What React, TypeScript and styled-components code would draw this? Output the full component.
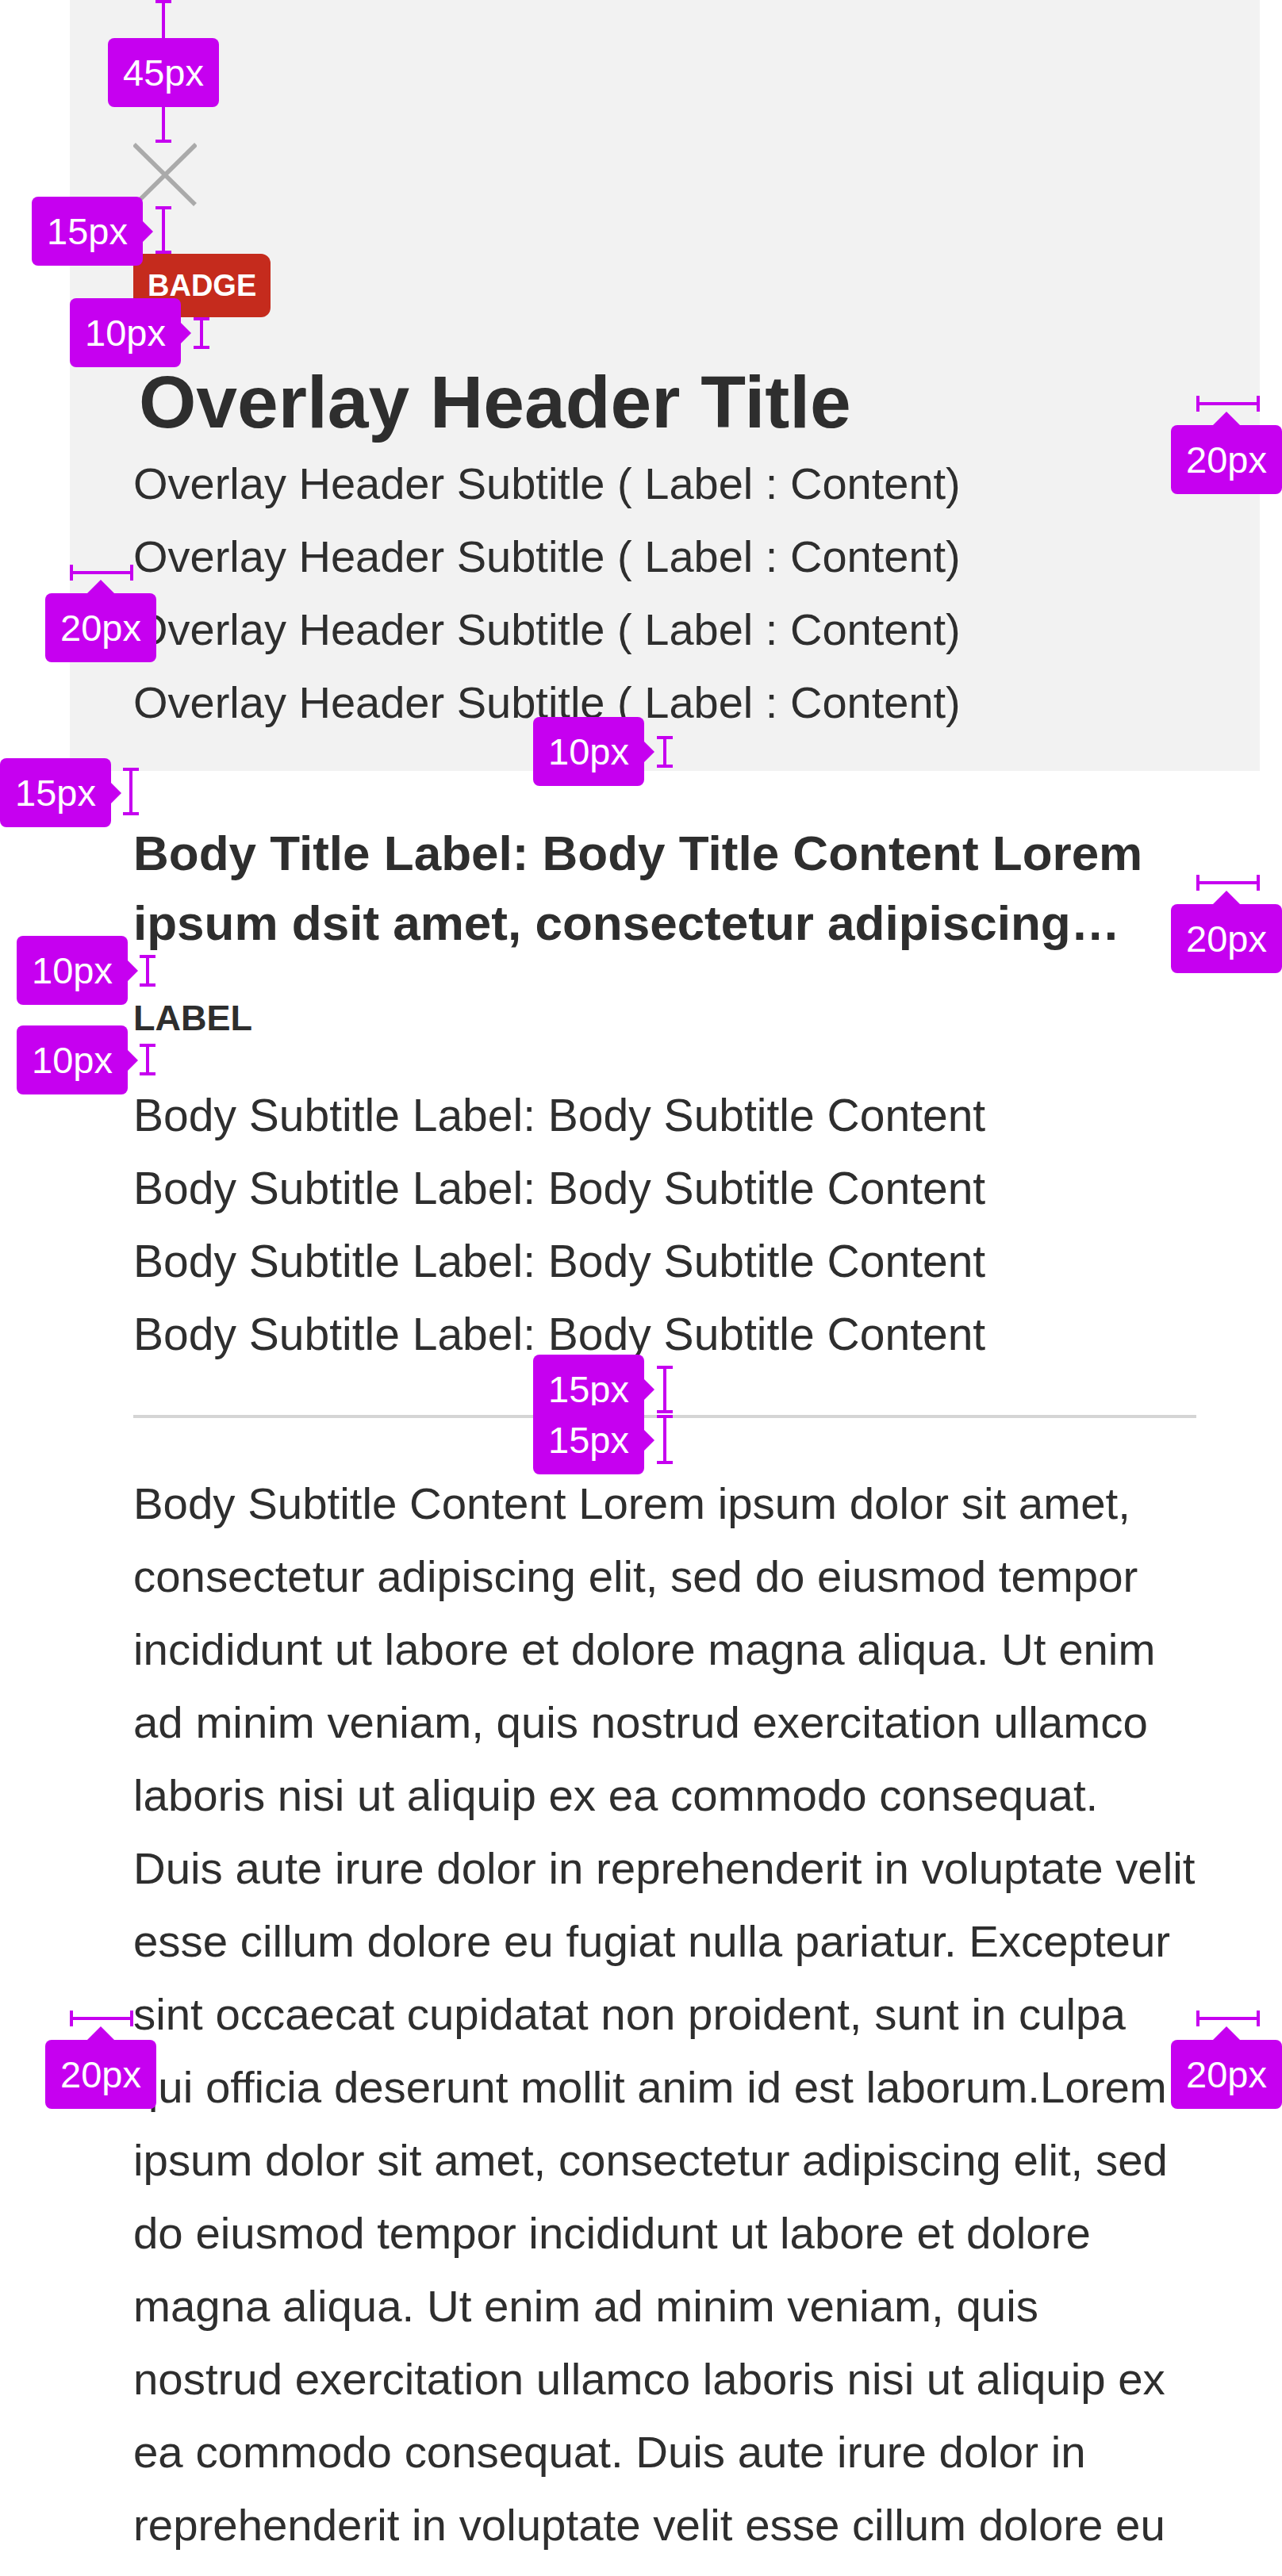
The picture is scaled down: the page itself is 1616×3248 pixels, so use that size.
import React from "react";
import styled, { createGlobalStyle, css } from "styled-components";

const INK = "#2e2e2e";
const MAGENTA = "#c600f0";
const FONT = `"Liberation Sans", Arial, Helvetica, sans-serif`;

const GlobalStyle = createGlobalStyle`
  html, body {
    margin: 0;
    padding: 0;
    background: #ffffff;
    overflow: hidden;
  }
  body {
    font-family: ${FONT};
    color: ${INK};
  }
  * { box-sizing: border-box; }
`;

const Canvas = styled.div`
  position: relative;
  width: 1616px;
  height: 3248px;
  overflow: hidden;
  background: #ffffff;
`;

const Screen = styled.main`
  margin-left: 88px;
  width: 1500px;
`;

/* ---------- overlay header ---------- */

const Header = styled.header`
  background: #f2f2f2;
  padding: 180px 80px 40px;
  display: flex;
  flex-direction: column;
  align-items: flex-start;
`;

const CloseButton = styled.button`
  display: block;
  width: 80px;
  height: 80px;
  padding: 0;
  border: 0;
  background: none;
  svg { display: block; }
`;

const Badge = styled.span`
  margin-top: 60px;
  height: 80px;
  padding: 0 18px;
  display: inline-flex;
  align-items: center;
  background: #c52b1d;
  color: #ffffff;
  border-radius: 12px;
  font-family: ${FONT};
  font-weight: 700;
  font-size: 38px;
  line-height: 1;
`;

const Title = styled.h1`
  margin: 40px 0 0;
  padding: 10px 0 0 7px;
  font-family: ${FONT};
  font-weight: 700;
  font-size: 93px;
  line-height: 114px;
  color: ${INK};
`;

const LineList = styled.div`
  display: flex;
  flex-direction: column;
  align-self: stretch;
`;

const Line = styled.p<{ $size?: number }>`
  margin: 0;
  font-family: ${FONT};
  font-size: ${(p) => p.$size ?? 56}px;
  line-height: 92px;
  color: ${INK};
  white-space: nowrap;
`;

/* ---------- body ---------- */

const Body = styled.section`
  padding: 60px 80px 0;
  display: flex;
  flex-direction: column;
`;

const BodyTitle = styled.h2`
  margin: 0;
  font-family: ${FONT};
  font-weight: 700;
  font-size: 62px;
  line-height: 88px;
  color: ${INK};
  display: -webkit-box;
  -webkit-line-clamp: 2;
  -webkit-box-orient: vertical;
  overflow: hidden;
`;

const Label = styled.div`
  margin-top: 40px;
  font-family: ${FONT};
  font-weight: 700;
  font-size: 45px;
  line-height: 72px;
  text-transform: uppercase;
  color: ${INK};
`;

const BodyLines = styled(LineList)`
  margin-top: 40px;
`;

const Divider = styled.hr`
  margin: 56px 0 0;
  height: 4px;
  border: 0;
  background: #d5d5d5;
`;

const Paragraph = styled.p`
  margin: 62px 0 0;
  font-family: ${FONT};
  font-size: 56.4px;
  line-height: 92px;
  color: ${INK};
`;

/* ---------- spec annotations (overlay) ---------- */

type Arrow = "right" | "up" | "none";

const Tag = styled.div<{ $x: number; $y: number; $arrow: Arrow }>`
  position: absolute;
  left: ${(p) => p.$x}px;
  top: ${(p) => p.$y}px;
  width: 140px;
  height: 87px;
  border-radius: 8px;
  background: ${MAGENTA};
  color: #ffffff;
  font-family: ${FONT};
  font-size: 47px;
  line-height: 1;
  display: flex;
  align-items: center;
  justify-content: center;
  &::after {
    content: "";
    position: absolute;
    width: 0;
    height: 0;
    ${(p) =>
      p.$arrow === "right" &&
      css`
        left: 100%;
        top: 50%;
        margin-top: -13px;
        border-left: 13px solid ${MAGENTA};
        border-top: 13px solid transparent;
        border-bottom: 13px solid transparent;
      `}
    ${(p) =>
      p.$arrow === "up" &&
      css`
        bottom: 100%;
        left: 50%;
        margin-left: -17px;
        border-bottom: 17px solid ${MAGENTA};
        border-left: 17px solid transparent;
        border-right: 17px solid transparent;
      `}
  }
`;

const VMeasure = styled.div<{ $x: number; $y1: number; $y2: number }>`
  position: absolute;
  left: ${(p) => p.$x - 10}px;
  top: ${(p) => p.$y1}px;
  width: 20px;
  height: ${(p) => p.$y2 - p.$y1}px;
  border-top: 4px solid ${MAGENTA};
  border-bottom: 4px solid ${MAGENTA};
  &::before {
    content: "";
    position: absolute;
    left: 8px;
    top: 0;
    bottom: 0;
    width: 4px;
    background: ${MAGENTA};
  }
`;

const HMeasure = styled.div<{ $x1: number; $x2: number; $y: number }>`
  position: absolute;
  left: ${(p) => p.$x1}px;
  top: ${(p) => p.$y - 10}px;
  width: ${(p) => p.$x2 - p.$x1}px;
  height: 20px;
  border-left: 4px solid ${MAGENTA};
  border-right: 4px solid ${MAGENTA};
  &::before {
    content: "";
    position: absolute;
    top: 8px;
    left: 0;
    right: 0;
    height: 4px;
    background: ${MAGENTA};
  }
`;

const vLines: Array<[number, number, number]> = [
  [206, 0, 180],
  [206, 260, 320],
  [254, 400, 440],
  [838, 928, 968],
  [165, 968, 1028],
  [186, 1204, 1244],
  [186, 1316, 1356],
  [838, 1722, 1782],
  [838, 1784, 1846],
];

const hLines: Array<[number, number, number]> = [
  [1508, 1588, 509],
  [88, 168, 722],
  [1508, 1588, 1113],
  [88, 168, 2545],
  [1508, 1588, 2545],
];

const tags: Array<{ x: number; y: number; text: string; arrow: Arrow }> = [
  { x: 136, y: 48, text: "45px", arrow: "none" },
  { x: 40, y: 248, text: "15px", arrow: "right" },
  { x: 88, y: 376, text: "10px", arrow: "right" },
  { x: 1476, y: 536, text: "20px", arrow: "up" },
  { x: 57, y: 748, text: "20px", arrow: "up" },
  { x: 672, y: 904, text: "10px", arrow: "right" },
  { x: 0, y: 956, text: "15px", arrow: "right" },
  { x: 1476, y: 1140, text: "20px", arrow: "up" },
  { x: 21, y: 1180, text: "10px", arrow: "right" },
  { x: 21, y: 1293, text: "10px", arrow: "right" },
  { x: 672, y: 1708, text: "15px", arrow: "right" },
  { x: 672, y: 1772, text: "15px", arrow: "right" },
  { x: 57, y: 2572, text: "20px", arrow: "up" },
  { x: 1476, y: 2572, text: "20px", arrow: "up" },
];

/* ---------- content ---------- */

const headerLines = Array.from({ length: 4 }, () => "Overlay Header Subtitle ( Label : Content)");
const bodyLines = Array.from({ length: 4 }, () => "Body Subtitle Label: Body Subtitle Content");

const LOREM =
  "Body Subtitle Content Lorem ipsum dolor sit amet, consectetur adipiscing elit, sed do eiusmod tempor incididunt ut labore et dolore magna aliqua. Ut enim ad minim veniam, quis nostrud exercitation ullamco laboris nisi ut aliquip ex ea commodo consequat. Duis aute irure dolor in reprehenderit in voluptate velit esse cillum dolore eu fugiat nulla pariatur. Excepteur sint occaecat cupidatat non proident, sunt in culpa qui officia deserunt mollit anim id est laborum.Lorem ipsum dolor sit amet, consectetur adipiscing elit, sed do eiusmod tempor incididunt ut labore et dolore magna aliqua. Ut enim ad minim veniam, quis nostrud exercitation ullamco laboris nisi ut aliquip ex ea commodo consequat. Duis aute irure dolor in reprehenderit in voluptate velit esse cillum dolore eu fugiat nulla pariatur. Excepteur sint occaecat cupidatat non proident, sunt in culpa qui officia deserunt mollit anim id est laborum.";

const CloseIcon = () => (
  <svg width="80" height="80" viewBox="0 0 80 80" aria-hidden="true">
    <g stroke="#aaaaaa" strokeWidth="5.5" strokeLinecap="butt">
      <line x1="1" y1="2" x2="78" y2="78" />
      <line x1="79" y1="2" x2="2" y2="78" />
    </g>
  </svg>
);

export default function App() {
  return (
    <>
      <GlobalStyle />
      <Canvas>
        <Screen>
          <Header>
            <CloseButton aria-label="Close">
              <CloseIcon />
            </CloseButton>
            <Badge>BADGE</Badge>
            <Title>Overlay Header Title</Title>
            <LineList>
              {headerLines.map((t, i) => (
                <Line key={i}>{t}</Line>
              ))}
            </LineList>
          </Header>
          <Body>
            <BodyTitle>
              Body Title Label: Body Title Content Lorem ipsum dsit amet, consectetur adipiscing…
            </BodyTitle>
            <Label>Label</Label>
            <BodyLines>
              {bodyLines.map((t, i) => (
                <Line key={i} $size={57}>
                  {t}
                </Line>
              ))}
            </BodyLines>
            <Divider />
            <Paragraph>{LOREM}</Paragraph>
          </Body>
        </Screen>

        {vLines.map(([x, y1, y2], i) => (
          <VMeasure key={`v${i}`} $x={x} $y1={y1} $y2={y2} />
        ))}
        {hLines.map(([x1, x2, y], i) => (
          <HMeasure key={`h${i}`} $x1={x1} $x2={x2} $y={y} />
        ))}
        {tags.map((t, i) => (
          <Tag key={`t${i}`} $x={t.x} $y={t.y} $arrow={t.arrow}>
            {t.text}
          </Tag>
        ))}
      </Canvas>
    </>
  );
}
